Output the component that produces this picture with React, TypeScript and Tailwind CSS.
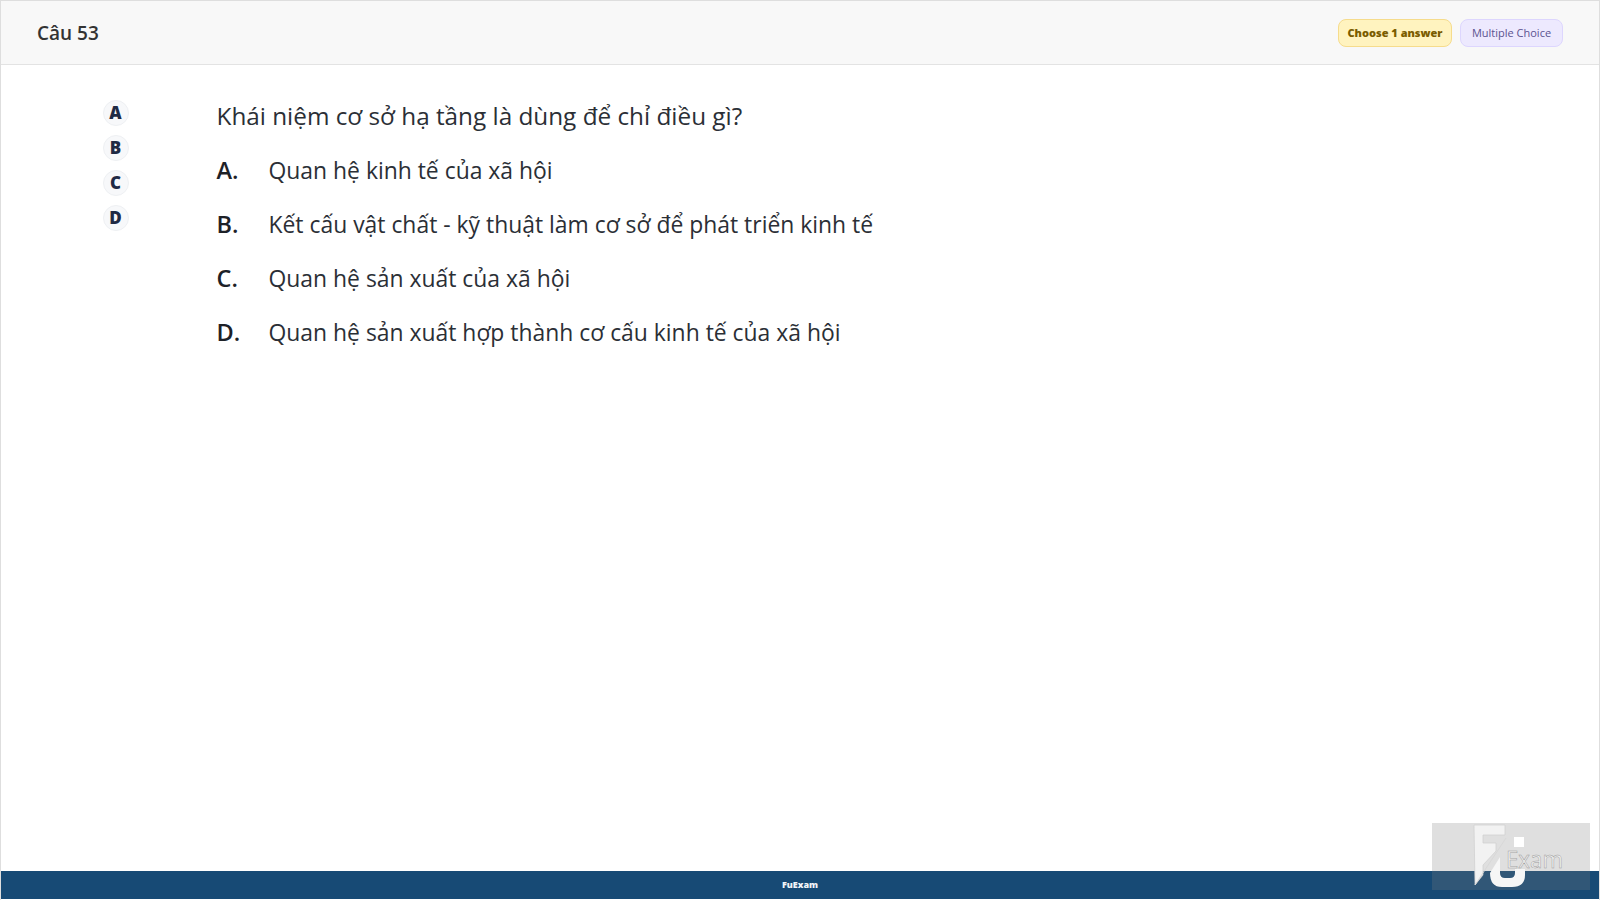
const font = { fontFamily: '"Open Sans", "Noto Sans", sans-serif' };

const options = [
  ["A.", "Quan hệ kinh tế của xã hội"],
  ["B.", "Kết cấu vật chất - kỹ thuật làm cơ sở để phát triển kinh tế"],
  ["C.", "Quan hệ sản xuất của xã hội"],
  ["D.", "Quan hệ sản xuất hợp thành cơ cấu kinh tế của xã hội"],
];

function Logo() {
  return (
    <div className="absolute left-[1431px] top-[822px] w-[158px] h-[67px] bg-[#808080]/25 overflow-hidden">
      <svg width="158" height="67" viewBox="0 0 158 67" fill="none">
        <path d="M42 2 H73 V12 H51 V20 H64 V28 L51 42 V52 L43 62 Z" fill="#f2f2f2" stroke="#cfcfcf" strokeWidth="0.7" />
        <path d="M43 62 L74 15" stroke="#d8d8d8" strokeWidth="1" />
        <path d="M58 50 L68 34 V50 Q68 55 73 55 H78 Q83 55 83 50 V46 H93 V52 Q93 64 80 64 H70 Q58 64 58 50 Z" fill="#f6f6f6" />
        <rect x="82" y="14" width="10" height="10" fill="#fff" />
        <text x="74" y="45" fill="#f0f0f0" stroke="#9c9c9c" strokeWidth="0.5" fontSize="24" fontFamily="'Open Sans', sans-serif" textLength="57" lengthAdjust="spacingAndGlyphs">Exam</text>
      </svg>
    </div>
  );
}

export default function App() {
  return (
    <div className="relative h-[900px] w-[1600px] flex flex-col bg-white border-t border-l border-r border-[#dedede] overflow-hidden" style={font}>
      <header className="h-[64px] shrink-0 flex items-center justify-between pl-[36px] pr-[36px] pt-[1px] bg-[#f8f8f8] border-b border-[#e3e3e3]">
        <div className="text-[19px] font-semibold text-[#333333]">Câu 53</div>
        <div className="flex items-center gap-2">
          <div className="h-[28px] w-[114px] flex items-center justify-center rounded-lg bg-[#fff3bf] border border-[#f6dc8c] text-[11px] font-extrabold text-[#7a5c00] whitespace-nowrap">Choose 1 answer</div>
          <div className="h-[28px] w-[103px] flex items-center justify-center rounded-lg bg-[#ede9fe] border border-[#ddd6fe] text-[11px] text-[#5b5390] whitespace-nowrap">Multiple Choice</div>
        </div>
      </header>
      <main className="flex-1 flex pt-[35px]">
        <div className="w-[215.5px] shrink-0 flex flex-col pl-[101.5px] gap-[9px]">
          {["A", "B", "C", "D"].map((l) => (
            <div key={l} className="w-[26px] h-[26px] rounded-full bg-[#f7f8fa] border border-[#eef0f3] flex items-center justify-center text-[17px] font-black text-[#1f2a44] [font-family:'Noto_Sans',sans-serif]">{l}</div>
          ))}
        </div>
        <div className="flex flex-col text-[#2b2f36] -mt-[3px]">
          <div className="text-[24.3px] leading-[38px] mb-[9px]">Khái niệm cơ sở hạ tầng là dùng để chỉ điều gì?</div>
          {options.map(([k, t]) => (
            <div key={k} className="flex items-center h-[54px] text-[22.9px]">
              <span className="w-[52px] shrink-0 text-[23.5px] font-semibold text-[#1d2127]">{k}</span>
              <span>{t}</span>
            </div>
          ))}
        </div>
      </main>
      <footer className="h-[28px] shrink-0 mb-[1px] bg-[#174a75] flex items-center justify-center text-[9px] font-extrabold text-[#f2f5f8]">FuExam</footer>
      <Logo />
    </div>
  );
}
